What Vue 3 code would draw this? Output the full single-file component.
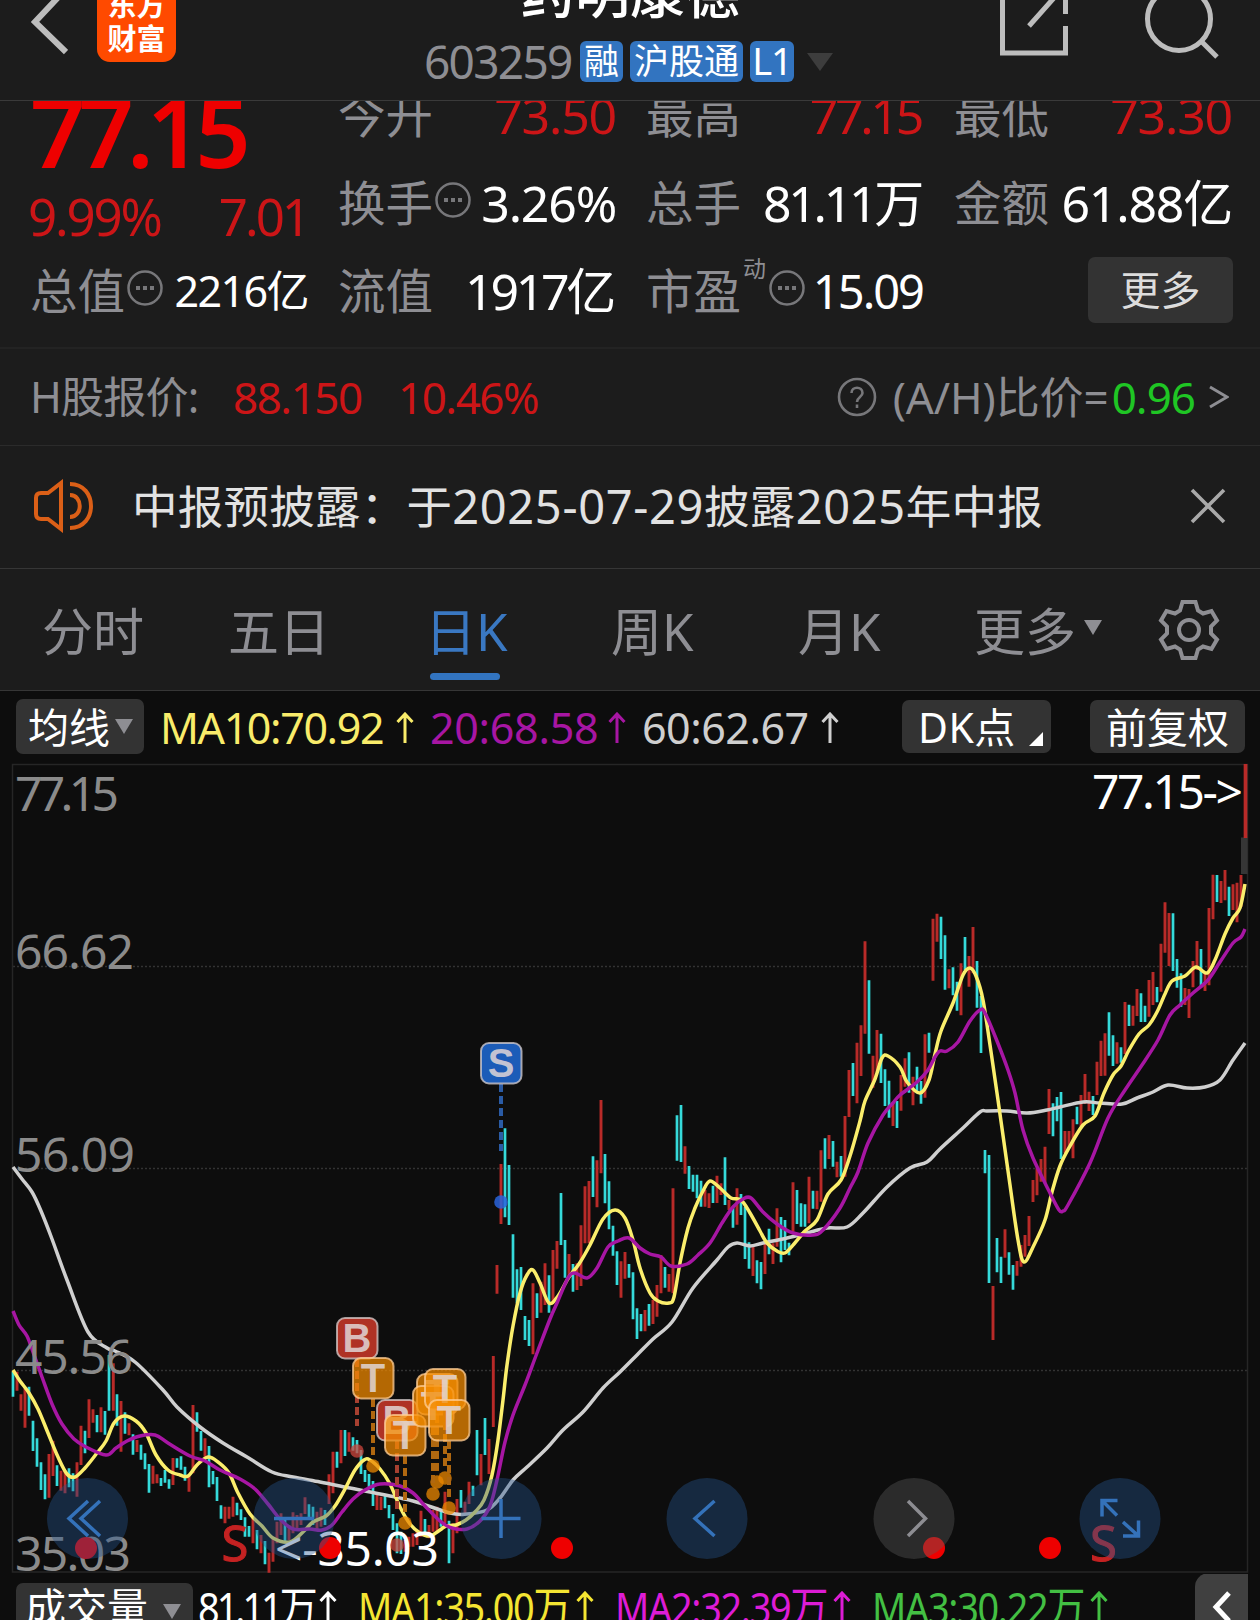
<script setup>
const columns = [
  [
    { label: '今开', value: '73.50', red: true },
    { label: '换手', value: '3.26%', info: true },
    { label: '流值', value: '1917亿', tight: true },
  ],
  [
    { label: '最高', value: '77.15', red: true, tight: true },
    { label: '总手', value: '81.11万', tight: true },
    { label: '市盈', value: '15.09', info: true, sup: '动', small: true },
  ],
  [
    { label: '最低', value: '73.30', red: true },
    { label: '金额', value: '61.88亿' },
  ],
]

const tabs = ['分时', '五日', '日K', '周K', '月K']

/* Bars are grouped in blocks: origin plus "x high low" triples in thirds of a pixel. */
const blocks = [
  {
    x: 0, y: 1280,
    up: '51 275 332,63 343 392,75 325 443,147 522 653,159 482 588,183 572 632,195 570 640,231 547 650,243 437 555,267 358 474,279 388 428,303 382 457,340 250 392,363 363 515,387 430 466,411 480 516,459 557 611,471 583 610,519 534 615,567 588 635,579 375 580,615 475 530,675 680 730,687 680 716,699 650 710,759 712 790,783 765 820,807 818 878,819 770 845,831 725 790,843 700 765,867 735 780,879 697 760,891 705 745,903 700 735,915 652 702,951 695 750',
    down: '39 275 350,87 320 407,99 422 513,111 475 560,123 547 630,135 583 658,171 556 618,207 565 622,219 580 634,255 452 520,291 405 457,315 393 464,327 225 392,351 343 437,375 397 461,399 463 524,423 494 539,435 520 568,447 552 638,483 594 618,495 570 608,507 598 626,531 535 563,543 529 569,555 560 602,591 397 455,603 453 512,627 498 622,639 573 613,651 591 663,663 676 716,711 668 706,723 688 720,735 712 770,747 738 770,771 750 808,795 783 853,855 720 790,927 673 713,939 680 735',
  },
  {
    x: 300, y: 1280,
    up: '63 683 740,87 583 672,99 515 640,123 450 550,147 457 515,231 645 690,243 650 690,315 780 815,327 770 800,339 760 800,351 750 795,363 692 770,387 735 775,399 690 755,411 680 760,435 635 730,459 730 820,471 657 760,495 665 700,507 605 672,543 522 616,567 477 582,580 228 441',
    down: '75 690 735,111 515 563,135 450 528,159 472 512,171 480 520,183 510 582,195 570 606,207 582 628,219 603 678,255 648 685,267 675 715,279 702 750,291 730 820,303 755 822,375 717 770,423 687 740,447 722 850,483 630 683,519 617 648,531 450 586,555 414 525',
  },
  {
    x: 460, y: 1020,
    up: '111 735 821,123 432 612,219 790 1003,243 785 878,255 730 855,279 690 850,291 663 746,327 702 770,351 730 810,363 616 798,375 499 670,387 483 670,411 421 562,423 240 460,483 724 833,495 696 776,555 870 934,579 840 912,591 795 890,603 705 820,627 762 815,639 505 820,675 379 461,735 510 560,747 520 564,771 467 549,783 490 525,807 540 570,831 505 614,879 680 768,915 665 762,939 670 731,951 565 660',
    down: '135 325 592,147 435 615,159 643 833,171 748 850,183 741 870,195 888 960,207 900 978,231 820 894,267 766 878,303 519 675,315 660 773,339 732 815,399 409 531,435 402 550,447 484 628,459 617 707,471 694 795,507 732 773,519 757 898,531 865 957,543 882 934,567 852 917,615 741 803,651 286 422,663 255 426,687 438 507,699 464 515,711 464 535,723 482 560,759 497 549,795 412 555,819 563 623,843 522 585,855 560 717,867 667 746,891 721 790,903 726 808,927 626 703',
  },
  {
    x: 620, y: 1060,
    up: '471 445 560,519 367 515,567 350 490,591 392 448,603 271 425,627 225 297,651 305 352,675 168 350,459 550 612',
    down: '483 471 607,495 480 570,507 548 586,531 390 492,543 430 500,555 433 500,579 392 446,615 235 326,639 243 320,663 288 350',
  },
  {
    x: 820, y: 880,
    up: '87 570 711,111 488 670,123 436 588,135 184 461,159 527 623,171 450 575,219 668 738,243 585 692,255 535 620,279 590 676,315 463 653,339 116 302,351 101 185,387 268 325,423 250 406,447 228 320,459 141 280,519 1218 1380,555 1048 1133,591 1143 1187,603 1095 1160,615 1065 1130,627 1008 1098,639 900 966,651 865 946,663 837 905,675 800 908',
    down: '99 549 648,147 301 521,183 461 609,195 568 678,207 602 713,231 663 744,267 517 638,291 560 640,303 603 671,327 458 518,363 110 237,375 166 329,399 262 346,411 305 392,435 171 270,471 243 383,483 348 519,495 810 880,507 825 1209,531 1074 1177,543 1130 1209,567 1117 1184,579 1155 1229',
  },
  {
    x: 1020, y: 750,
    up: '87 1017 1152,135 1143 1210,147 1143 1195,159 1108 1225,183 1035 1128,195 972 1062,207 1025 1083,231 935 1035,243 872 978,255 850 977,291 877 941,315 756 912,339 767 827,351 717 798,387 690 800,399 666 765,423 581 725,435 457 608,447 489 648,495 714 765,507 717 804,519 633 712,531 573 660,555 672 723,567 474 706,579 374 508,603 393 459,615 360 451,639 403 480,651 398 517,663 375 470',
    down: '99 1060 1159,111 1041 1114,123 1026 1227,171 1070 1123,219 1038 1095,267 787 917,279 856 948,303 892 938,327 764 828,363 730 816,375 767 816,411 711 757,459 490 663,471 627 713,483 670 770,543 597 712,591 375 456,627 410 498',
  },
]

const bars = (key) =>
  blocks
    .map((b) =>
      b[key]
        .split(',')
        .map((t) => {
          const [x, hi, lo] = t.split(' ').map(Number)
          return `M${(b.x + x / 3).toFixed(1)} ${(b.y + hi / 3).toFixed(1)}V${(b.y + lo / 3).toFixed(1)}`
        })
        .join(''),
    )
    .join('')

const upBars = bars('up')
const downBars = bars('down')

/* Smooth curve through "x,y" points. */
const curve = (text) => {
  const p = text.split(' ').map((s) => s.split(',').map(Number))
  let d = `M${p[0][0]} ${p[0][1]}`
  for (let i = 0; i < p.length - 1; i++) {
    const a = p[i - 1] || p[i]
    const b = p[i]
    const c = p[i + 1]
    const e = p[i + 2] || c
    d += `C${(b[0] + (c[0] - a[0]) / 6).toFixed(1)} ${(b[1] + (c[1] - a[1]) / 6).toFixed(1)} ${(c[0] - (e[0] - b[0]) / 6).toFixed(1)} ${(c[1] - (e[1] - b[1]) / 6).toFixed(1)} ${c[0]} ${c[1]}`
  }
  return d
}

const ma10 = curve('13,1370 20,1381 29,1393 38,1409 48,1433 58,1457 67,1474 75,1477 85,1468 97,1453 106,1441 114,1423 124,1416 136,1421 146,1433 156,1455 168,1470 180,1475 188,1476 197,1465 208,1457 218,1462 229,1473 238,1493 250,1514 262,1526 273,1538 290,1542 303,1532 313,1522 326,1516 335,1506 345,1489 355,1470 364,1460 370,1460 380,1469 390,1484 400,1507 410,1524 420,1533 430,1536 440,1530 446,1526 456,1525 466,1520 475,1512 484,1500 492,1475 498,1440 503,1400 507,1365 513,1326 520,1293 527,1275 533,1270 540,1283 549,1303 558,1296 569,1277 579,1264 590,1245 603,1219 615,1210 625,1218 633,1240 640,1268 650,1293 658,1301 669,1303 674,1297 680,1263 688,1228 695,1208 703,1191 710,1181 720,1188 731,1198 741,1200 750,1213 760,1231 767,1243 777,1251 785,1253 794,1244 805,1231 817,1220 828,1194 841,1180 850,1156 860,1121 865,1101 875,1079 882,1058 888,1056 900,1067 907,1082 920,1093 929,1080 935,1054 941,1031 953,1003 963,975 970,968 976,976 983,1000 990,1045 998,1100 1010,1185 1018,1240 1024,1262 1034,1245 1045,1220 1052,1192 1060,1166 1070,1146 1083,1125 1095,1116 1104,1093 1113,1075 1121,1066 1129,1050 1139,1034 1149,1025 1157,1012 1165,994 1172,981 1185,976 1196,967 1207,973 1215,960 1225,934 1233,918 1240,908 1245,884')
const ma20 = curve('13,1311 19,1325 27,1336 33,1352 42,1377 52,1404 62,1424 74,1439 86,1447 106,1455 116,1448 127,1441 140,1436 155,1435 168,1443 190,1456 205,1461 220,1470 240,1479 255,1489 268,1504 280,1519 293,1529 310,1529 322,1530 332,1525 342,1512 353,1499 365,1490 380,1484 400,1486 413,1493 425,1506 440,1521 452,1528 467,1529 480,1521 490,1506 497,1480 505,1442 513,1415 525,1385 537,1353 550,1319 557,1303 568,1278 575,1273 587,1278 597,1268 608,1247 618,1241 629,1238 640,1248 650,1254 661,1257 671,1266 687,1264 698,1255 710,1243 722,1223 733,1207 743,1199 751,1198 763,1212 777,1224 793,1233 813,1235 823,1230 840,1208 850,1188 858,1172 868,1143 883,1115 893,1103 900,1095 917,1082 928,1070 935,1057 940,1051 947,1051 958,1042 970,1021 980,1010 985,1013 997,1041 1008,1070 1015,1093 1023,1130 1033,1158 1050,1193 1059,1210 1063,1211 1068,1205 1090,1163 1108,1118 1125,1090 1142,1065 1158,1040 1170,1015 1180,1005 1193,993 1208,980 1220,962 1233,943 1241,937 1245,929')
const ma60 = curve('13,1167 22,1179 32,1192 41,1211 52,1239 67,1280 88,1332 107,1348 115,1351 135,1362 163,1390 177,1407 200,1427 223,1443 247,1457 272,1472 293,1477 320,1482 350,1488 380,1494 413,1501 450,1513 467,1514 487,1510 500,1498 513,1480 527,1467 547,1448 563,1430 583,1412 603,1388 620,1372 637,1355 653,1339 672,1322 693,1288 717,1260 728,1247 737,1243 750,1246 763,1243 787,1238 807,1233 827,1228 847,1227 863,1213 887,1187 910,1168 927,1162 940,1149 963,1128 980,1112 987,1111 1007,1111 1027,1113 1047,1110 1060,1107 1083,1102 1100,1103 1122,1104 1137,1098 1153,1092 1168,1085 1187,1088 1205,1087 1220,1080 1233,1060 1245,1043')

const axis = [
  { text: '77.15', y: 811, w: 104 },
  { text: '66.62', y: 969, w: 119 },
  { text: '56.09', y: 1172, w: 120 },
  { text: '45.56', y: 1374, w: 118 },
  { text: '35.03', y: 1571, w: 116 },
]

const markers = [
  { t: 'S', x: 501, y: 1063, end: 1151, dot: 1202 },
  { t: 'B', x: 357, y: 1338, end: 1426, dot: 1451 },
  { t: 'T', x: 373, y: 1378, end: 1455, dot: 1466 },
  { t: 'B', x: 397, y: 1420, end: 1510, dot: 1545 },
  { t: 'T', x: 405, y: 1435, end: 1515, dot: 1523 },
  { t: 'T', x: 437, y: 1394, end: 1472, dot: 1482 },
  { t: 'T', x: 433, y: 1406, end: 1484, dot: 1494 },
  { t: 'T', x: 445, y: 1389, end: 1470, dot: 1478 },
  { t: 'T', x: 449, y: 1420, end: 1500, dot: 1508 },
]

const controls = [
  { x: 87.5, d: 'M.5-17.5-18.500 0 .5 17.500M12.500-17.500-6.500 0 12.500 17.500' },
  { x: 294, d: 'M-20 0H20' },
  { x: 501, d: 'M-19.500 0H19.500M0-19.500V19.500' },
  { x: 707, d: 'M7.500-17.500-12 0 7.500 17.500' },
  { x: 914, d: 'M-6-17.500 11.500 0-6 17.500', off: true },
  { x: 1120, d: 'M-2.500-18H-18V-2M-18-18-3-3M3 17.500H18.500V2M18.500 17.500 3 3.500' },
]
</script>

<template>
  <div class="page">
    <header class="top">
      <div class="side left">
        <svg class="back" width="40" height="62" viewBox="0 0 40 62"><path d="M37-10 7 22 38 52" /></svg>
        <div class="logo"><span>东方</span><span>财富</span></div>
      </div>
      <div class="name">
        <h1>药明康德</h1>
        <div class="code">
          <span class="num">603259</span>
          <b class="rong">融</b><b class="hgt">沪股通</b><b class="lv">L1</b>
          <svg width="26" height="18" viewBox="0 0 26 18"><path d="M0 0H26L13 18Z" fill="#3d3d3d" /></svg>
        </div>
      </div>
      <svg class="tools" width="230" height="70" viewBox="990 0 230 70">
        <path d="M1002.500-5V53H1065.500V26M1065.500 14V-5M1029 26 1061-10" />
        <circle cx="1179" cy="19" r="31.500" /><path d="M1201 41 1217 57" />
      </svg>
    </header>

    <section class="quote">
      <div class="grid">
        <div class="first">
          <div class="price">77.15</div>
          <div class="change"><span>9.99%</span><span>7.01</span></div>
          <div class="cell">
            <span class="label">总值</span>
            <svg class="info" viewBox="0 0 38 38"><circle cx="19" cy="19" r="16.500" /><path d="M10 19h4M17 19h4M24 19h4" /></svg>
            <span class="value mid">2216亿</span>
          </div>
        </div>
        <div v-for="(col, i) in columns" :key="i" class="col">
          <div v-for="c in col" :key="c.label" class="cell">
            <span class="label">{{ c.label }}</span>
            <sup v-if="c.sup">{{ c.sup }}</sup>
            <svg v-if="c.info" class="info" viewBox="0 0 38 38"><circle cx="19" cy="19" r="16.500" /><path d="M10 19h4M17 19h4M24 19h4" /></svg>
            <span class="value" :class="{ red: c.red, small: c.small, tight: c.tight }">{{ c.value }}</span>
          </div>
          <div v-if="i === 2" class="cell end"><button class="more">更多</button></div>
        </div>
      </div>
    </section>

    <section class="hshare">
      <span class="hl">H股报价:</span><span class="hp">88.150</span><span class="hc">10.46%</span>
      <svg class="help" width="40" height="40" viewBox="0 0 40 40">
        <circle cx="20" cy="20" r="18" /><path d="M14.500 16c0-7 11-7 11 0 0 4-5.500 4-5.500 9" /><path d="M20 27.500v3.500" />
      </svg>
      <span class="ratio">(A/H)比价=</span><span class="green">0.96</span>
      <svg class="gt" width="20" height="26" viewBox="0 0 20 26"><path d="M1 3 18 13 1 23" /></svg>
    </section>

    <section class="notice">
      <svg class="horn" width="62" height="54" viewBox="0 0 62 54">
        <path d="M28 4V50L15 40H8Q3 40 3 35V19Q3 14 8 14H15Z" /><path d="M37 16c13 0 13 22 0 22M37 5c28 0 28 44 0 44" />
      </svg>
      <p>中报预披露：于<i>2025-07-29</i>披露<i>2025</i>年中报</p>
      <svg class="close" width="36" height="36" viewBox="0 0 36 36"><path d="M2 2 34 34M34 2 2 34" /></svg>
    </section>

    <nav class="tabs">
      <a v-for="(t, i) in tabs" :key="t" :class="['tab', 't' + i, { on: i === 2 }]">{{ t }}</a>
      <a class="tab all">更多</a>
      <svg class="tri" width="18" height="15" viewBox="0 0 18 15"><path d="M0 0H18L9 15Z" fill="#8e8e93" /></svg>
      <svg class="gear" width="62" height="62" viewBox="-31 -31 62 62">
        <path d="M-6.500-28H6.500L9-19.500 14-16.500 22.500-19 28-9.500 22-3.500V3.500L28 9.500 22.500 19 14 16.500 9 19.500 6.500 28H-6.500L-9 19.500-14 16.500-22.500 19-28 9.500-22 3.500V-3.500L-28-9.500-22.500-19-14-16.500-9-19.500Z" />
        <circle r="10" />
      </svg>
    </nav>

    <div class="ma">
      <div class="btn b1">均线<svg width="18" height="15" viewBox="0 0 18 15"><path d="M0 0H18L9 15Z" fill="#8e8e93" /></svg></div>
      <div class="run yellow r1">MA10:70.92<svg class="arrow" viewBox="0 0 18 32"><path d="M9 31V2M1.500 10 9 2 16.500 10" /></svg></div>
      <div class="run purple r2">20:68.58<svg class="arrow" viewBox="0 0 18 32"><path d="M9 31V2M1.500 10 9 2 16.500 10" /></svg></div>
      <div class="run silver r3">60:62.67<svg class="arrow" viewBox="0 0 18 32"><path d="M9 31V2M1.500 10 9 2 16.500 10" /></svg></div>
      <div class="btn b2">DK点<svg class="corner" width="14" height="14" viewBox="0 0 14 14"><path d="M14 0V14H0Z" fill="#fff" /></svg></div>
      <div class="btn b3">前复权</div>
    </div>

    <svg class="chart" width="1260" height="816" viewBox="0 758 1260 816">
      <g fill="none" stroke="#333" stroke-width="1.300" stroke-dasharray="2 2"><path d="M13 966.500H1247M13 1168.500H1247M13 1370.500H1247" /></g>
      <path d="M12.500 764.500H1247.500V1572H12.500Z" fill="none" stroke="#262626" stroke-width="1.500" />
      <rect x="1241" y="837.500" width="6.500" height="36.500" fill="#363636" />
      <path :d="upBars" stroke="#b92a28" stroke-width="2.900" />
      <path d="M1245.500 764V838" stroke="#b92a28" stroke-width="3.700" />
      <path :d="downBars" stroke="#35dada" stroke-width="2.700" />
      <g fill="none" stroke-width="3.500" stroke-linejoin="round">
        <path :d="ma60" stroke="#cfcfcf" /><path :d="ma10" stroke="#fbee6c" /><path :d="ma20" stroke="#a716a3" />
      </g>
      <g class="axis"><text v-for="a in axis" :key="a.text" x="15" :y="a.y" :textLength="a.w">{{ a.text }}</text></g>
      <text class="peak" x="1092" y="809" textLength="151">77.15-&gt;</text>
      <text class="peak" x="275" y="1566" textLength="164">&lt;-35.03</text>
      <g v-for="(m, i) in markers" :key="i" :class="['mark', m.t]">
        <path :d="`M${m.x} ${m.y + 21}V${m.end}`" stroke-width="4" stroke-dasharray="8 4" />
        <circle :cx="m.x" :cy="m.dot" r="6.800" />
        <rect :x="m.x - 20" :y="m.y - 20" width="40.500" height="40.500" rx="8" />
        <text :x="m.x" :y="m.y + 14">{{ m.t }}</text>
      </g>
      <g fill="#ee0000"><circle v-for="x in [86, 330, 562, 934, 1050]" :key="x" :cx="x" cy="1548" r="11" /></g>
      <text class="sell" x="235" y="1561">S</text><text class="sell" x="1103.500" y="1561">S</text>
      <g v-for="c in controls" :key="c.x" :class="['ctl', { off: c.off }]" :transform="`translate(${c.x} 1518.500)`"><circle r="40.500" /><path :d="c.d" /></g>
    </svg>

    <div class="vol">
      <div class="btn b4">成交量<svg width="18" height="15" viewBox="0 0 18 15"><path d="M0 0H18L9 15Z" fill="#8e8e93" /></svg></div>
      <div class="run white v1"><span>81.11万</span><svg class="arrow" viewBox="0 0 18 32"><path d="M9 31V2M1.500 10 9 2 16.500 10" /></svg></div>
      <div class="run gold v2"><span>MA1:35.00万</span><svg class="arrow" viewBox="0 0 18 32"><path d="M9 31V2M1.500 10 9 2 16.500 10" /></svg></div>
      <div class="run pink v3"><span>MA2:32.39万</span><svg class="arrow" viewBox="0 0 18 32"><path d="M9 31V2M1.500 10 9 2 16.500 10" /></svg></div>
      <div class="run lime v4"><span>MA3:30.22万</span><svg class="arrow" viewBox="0 0 18 32"><path d="M9 31V2M1.500 10 9 2 16.500 10" /></svg></div>
      <div class="pull"><svg width="22" height="34" viewBox="0 0 22 34"><path d="M18 3 5 17 18 31" /></svg></div>
    </div>
  </div>
</template>

<style>
html, body { background: #0d0d0d; overflow: hidden; }
</style>

<style scoped>
.page { width: 1260px; height: 1620px; overflow: hidden; background: #0d0d0d; color: #fff; font-family: "Noto Sans", "Noto Sans CJK SC", sans-serif; white-space: nowrap; display: flex; flex-direction: column; }
.page > * { box-sizing: border-box; flex: none; }
svg { display: block; flex: none; fill: none; }

.top { height: 101px; background: #1c1c1c; border-bottom: 1px solid #3a3a3a; display: flex; position: relative; overflow: hidden; }
.left { display: flex; width: 424px; padding-left: 28px; box-sizing: border-box; }
.back path { stroke: #bdbdbd; stroke-width: 6; }
.logo { margin: -18px 0 0 29px; width: 79px; height: 80px; box-sizing: border-box; padding-top: 4px; border-radius: 13px; background: #ff4a00; font: 700 29px/34px "Noto Sans CJK SC", sans-serif; display: flex; flex-direction: column; align-items: center; }
.name { width: 420px; }
.name h1 { margin: -45px 0 0 96px; font-size: 55px; line-height: 74px; font-weight: 500; letter-spacing: 0; height: 70px; }
.code { display: flex; align-items: center; height: 41px; margin-top: 16px; }
.num { color: #8e8e93; font-size: 46px; letter-spacing: -1.7px; width: 156px; line-height: 41px; }
.code b { background: #3274c0; border-radius: 6px; height: 41px; line-height: 39px; text-align: center; font-weight: 400; font-size: 35px; margin-right: 7px; }
.rong { width: 43px; } .hgt { width: 113px; } .lv { width: 44px; font-size: 38px !important; letter-spacing: -1px; }
.code svg { margin-left: 6px; }
.tools { margin-left: 146px; stroke: #bdbdbd; stroke-width: 5; }

.quote { height: 246px; background: #1c1c1c; overflow: hidden; }
.grid { display: grid; grid-template-columns: repeat(4, 278px); gap: 30px; margin: -30px 0 0 30px; height: 264px; }
.price { height: 118px; line-height: 119px; font-size: 97px; font-weight: 570; letter-spacing: -7px; color: #ee0000; }
.change { height: 53px; line-height: 55px; display: flex; justify-content: space-between; padding-right: 0; font-size: 51px; letter-spacing: -2.200px; color: #cc1517; margin: 0 0 5px -2px; }
.change span:last-child { letter-spacing: -3px; }
.cell { height: 88px; line-height: 88px; display: flex; align-items: center; position: relative; }
.label { font-size: 47.5px; color: #8e8e93; }
.info { width: 38px; height: 38px; stroke: #77777a; stroke-width: 2.500; margin: -7px 0 0 1px; }
.info path { stroke-width: 4; }
.value { margin-left: auto; font-size: 50px; letter-spacing: -1.200px; margin-right: 0; font-weight: 400; }
.value.tight { letter-spacing: -3.300px; margin-right: 3px; }
.value.red { color: #cc1517; font-weight: 400; }
.value.mid { font-size: 43px; letter-spacing: -1.600px; }
.value.small { font-size: 47px; letter-spacing: -2px; margin-right: 1px; }
sup { font-size: 23px; line-height: 24px; color: #8e8e93; margin: -46px 0 0 2px; width: 24px; }
.end { justify-content: flex-end; }
.more { width: 145px; height: 66px; border: 0; border-radius: 7px; background: #333; color: #ddd; font: 40px/62px "Noto Sans CJK SC", sans-serif; padding: 0 0 4px; margin: -3px -1px 0 0; }

.hshare { height: 99px; background: #1c1c1c; border-top: 2px solid #232323; border-bottom: 1px solid #2b2b2b; margin: 0; padding: 0 31px 0 30px; display: flex; align-items: center; font-size: 44px; letter-spacing: -1.500px; color: #8e8e93; line-height: 90px; }
.hl { width: 203px; font-size: 43px; letter-spacing: -.8px; } .hp { width: 165px; color: #cc1517; } .hc { color: #cc1517; }
.hshare span { margin-top: -1px; }
.help { margin-left: auto; stroke: #77777a; stroke-width: 2.600; margin-right: 16px; }
.ratio { width: 219px; letter-spacing: -.1px; } .green { color: #1fc624; margin-right: 14px; letter-spacing: -1px; }
.gt { stroke: #8e8e93; stroke-width: 3; }

.notice { height: 123px; background: #1c1c1c; border-bottom: 1px solid #363636; padding: 0 34px 2px 33px; display: flex; align-items: center; font-size: 45.5px; color: #e2e2e2; }
.notice p { margin: 0; line-height: 60px; letter-spacing: .25px; }
.notice i { font-style: normal; font-size: 47px; letter-spacing: .65px; }
.horn { stroke: #db5f17; stroke-width: 4; margin-right: 37px; }
.close { margin-left: auto; stroke: #a9a9a9; stroke-width: 3.600; }

.tabs { height: 122px; background: #1c1c1c; border-bottom: 1px solid #363636; display: flex; align-items: center; color: #8e8e93; font-size: 51px; line-height: 122px; }
.tab { height: 120px; position: relative; }
.t0 { margin-left: 42px; width: 186px; } .t1 { width: 197px; } .t2 { width: 186px; } .t3 { width: 187px; } .t4 { width: 176px; }
.all { width: 110px; }
.on { color: #3a78c2; }
.on::after { content: ""; position: absolute; left: 5px; bottom: 10px; width: 70px; height: 7px; border-radius: 4px; background: #3274c0; }
.gear { stroke: #8e8e93; stroke-width: 4; margin-left: 56px; }
.tri { margin-top: -4px; }

.ma { height: 67px; padding: 8px 15px 0 16px; display: flex; align-items: flex-start; }
.btn { background: #333; border-radius: 7px; height: 55px; line-height: 52px; box-sizing: border-box; font-size: 41px; display: flex; align-items: center; position: relative; }
.b1 { width: 128px; padding-left: 12px; gap: 5px; margin-right: 16px; }
.b2 { width: 149px; padding-left: 16px; margin-left: auto; margin-right: 39px; letter-spacing: .5px; height: 53px; margin-top: 1px; }
.corner { position: absolute; right: 8px; bottom: 7px; }
.b3 { width: 155px; padding-left: 16px; height: 53px; margin-top: 1px; }
.run { display: flex; align-items: center; line-height: 57px; font-size: 43px; }
.arrow { width: 18px; height: 32px; stroke: currentColor; stroke-width: 3; }
.r1 { width: 270px; letter-spacing: -1.400px; } .r2 { width: 212px; letter-spacing: -.3px; } .r3 { width: 202px; letter-spacing: -.5px; }
.r1 .arrow, .r2 .arrow { margin-left: auto; margin-right: 16px; }
.r3 .arrow { margin-left: auto; margin-right: 5px; }
.yellow { color: #f9ec6a; } .purple { color: #a716a3; } .silver { color: #cfcfcf; } .white { color: #fff; } .gold { color: #f4e532; } .pink { color: #dd1cd6; } .lime { color: #43c043; }

.axis text { font-size: 48px; fill: #8b8b8b; }
.peak { font-size: 48px; fill: #fff; }
.mark text { font: 700 40px "Liberation Sans", sans-serif; text-anchor: middle; fill: rgba(225, 215, 215, .85); }
.mark rect { stroke: rgba(215, 205, 205, .75); stroke-width: 2; }
.S rect { fill: #1c5cb8; } .S path { stroke: #2a5ba5; } .S circle { fill: rgba(42, 100, 220, .85); }
.B rect { fill: rgba(205, 58, 42, .85); } .B path { stroke: #a84030; } .B circle { fill: rgba(205, 70, 60, .75); }
.T rect { fill: rgba(245, 140, 0, .72); stroke: rgba(255, 205, 150, .75); } .T path { stroke: #b06810; } .T circle { fill: rgba(235, 135, 0, .75); }
.sell { font-size: 49px; fill: #c42222; stroke: #c42222; stroke-width: 1; text-anchor: middle; }
.ctl circle { fill: rgba(38, 85, 143, .4); }
.ctl path { stroke: #3472ba; stroke-width: 3.500; }
.ctl.off circle { fill: rgba(90, 90, 90, .4); }
.ctl.off path { stroke: #8d8d92; }

.vol { height: 46px; display: flex; overflow: hidden; padding-left: 16px; position: relative; align-items: flex-start; }
.b4 { width: 177px; margin: 9px 5px 0 0; padding-left: 9px; gap: 15px; line-height: 48px; align-items: flex-start; }
.b4 svg { margin-top: 21px; }
.vol .run { font-size: 44px; line-height: 54px; margin-top: 6px; letter-spacing: -1.500px; }
.vol .run span { width: 0; transform: scaleX(.86); transform-origin: left; }
.vol .v1 span { letter-spacing: -3.500px; }
.vol .arrow { margin-left: auto; margin-right: 21px; }
.v1 { width: 160px; } .v2 { width: 257px; } .v3 { width: 257px; } .v4 { width: 257px; }
.pull { position: absolute; left: 1195px; top: -1px; width: 53px; height: 60px; border-radius: 14px 0 0; background: #404040; display: flex; padding: 17px 0 0 16px; box-sizing: border-box; }
.pull svg { stroke: #fff; stroke-width: 5; }
</style>
